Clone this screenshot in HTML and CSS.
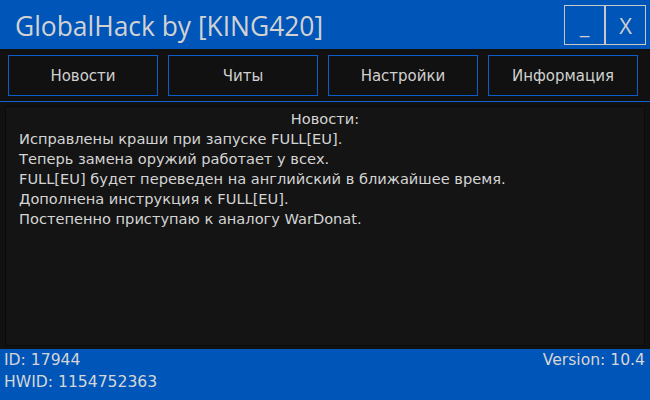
FILE: index.html
```html
<!DOCTYPE html>
<html lang="ru">
<head>
    <meta charset="UTF-8">
    <title>GlobalHack by [KING420]</title>
    <link rel="stylesheet" href="styles.css">
</head>
<body>
    <div class="window">
        <div class="titlebar">
            <div class="title">GlobalHack by [KING420]</div>
            <div class="controls">
                <button class="ctl">_</button>
                <button class="ctl">X</button>
            </div>
        </div>

        <div class="tabs">
            <button class="tab">Новости</button>
            <button class="tab">Читы</button>
            <button class="tab">Настройки</button>
            <button class="tab">Информация</button>
        </div>

        <div class="content">
            <div class="panel">
                <div class="panel-title">Новости:</div>
                <div class="line">Исправлены краши при запуске FULL[EU].</div>
                <div class="line">Теперь замена оружий работает у всех.</div>
                <div class="line">FULL[EU] будет переведен на английский в ближайшее время.</div>
                <div class="line">Дополнена инструкция к FULL[EU].</div>
                <div class="line">Постепенно приступаю к аналогу WarDonat.</div>
            </div>
        </div>

        <div class="statusbar">
            <div class="status-left">
                <div>ID: 17944</div>
                <div>HWID: 1154752363</div>
            </div>
            <div class="status-right">Version: 10.4</div>
        </div>
    </div>
</body>
</html>
```

FILE: styles.css
```css
body {
    margin: 0;
    background: #111111;
    font-family: "DejaVu Sans", Verdana, sans-serif;
    color: #d4d4d4;
}
.window {
    width: 650px;
    height: 400px;
    display: flex;
    flex-direction: column;
    background: #111111;
}
.titlebar {
    height: 49px;
    background: #0055b9;
    display: flex;
    align-items: flex-start;
    justify-content: space-between;
}
.title {
    font-family: "Open Sans", "Noto Sans", sans-serif;
    font-size: 26.4px;
    padding: 9px 0 0 15px;
    line-height: 34px;
    color: #d2d2d2;
}
.controls {
    display: flex;
    padding: 5px 4px 0 0;
}
.ctl {
    width: 41px;
    height: 40px;
    background: transparent;
    border: 1px solid #c8c8c8;
    color: #cfcfcf;
    font-family: "Open Sans", sans-serif;
    font-size: 22px;
    padding: 0;
    margin: 0;
}
.tabs {
    display: grid;
    grid-template-columns: repeat(4, 150px);
    column-gap: 10px;
    padding: 6px 0 5px 8px;
    border-bottom: 1px solid #1060d0;
}
.tab {
    height: 41px;
    background: #111111;
    border: 1px solid #0d5ccc;
    color: #d0d0d0;
    font-family: "DejaVu Sans", sans-serif;
    font-size: 15px;
    padding: 0;
}
.content {
    flex: 1;
    padding: 4px 5px 3px 5px;
    display: flex;
}
.panel {
    flex: 1;
    background: #141414;
    border: 1px solid #0a0a0a;
    padding: 2px 13px;
    font-size: 14.6px;
    line-height: 20px;
}
.panel-title {
    text-align: center;
}
.statusbar {
    height: 51px;
    background: #0055b9;
    display: flex;
    justify-content: space-between;
    padding: 0 5px 0 4px;
    font-size: 15.6px;
    line-height: 22px;
    color: #d6d6d6;
}
```
